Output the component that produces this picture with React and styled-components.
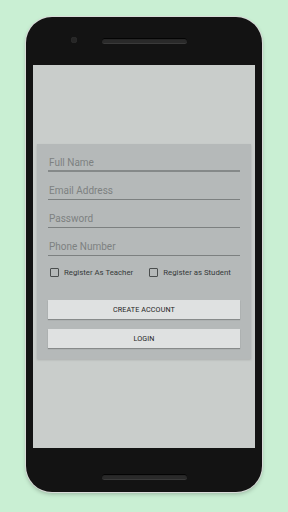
import React from "react";
import styled, { createGlobalStyle } from "styled-components";

const GlobalStyle = createGlobalStyle`
  html, body {
    margin: 0;
    padding: 0;
    background: #c9efd3;
    font-family: Roboto, "Liberation Sans", sans-serif;
  }
`;

const Page = styled.div`
  width: 288px;
  height: 512px;
  display: flex;
  justify-content: center;
  padding-top: 17px;
  box-sizing: border-box;
`;

const Phone = styled.div`
  width: 236px;
  height: 475px;
  background: #131313;
  border-radius: 26px;
  box-shadow: 0 0 0 1px #d9dcd9, 0 2px 4px rgba(0, 0, 0, 0.25);
  display: flex;
  flex-direction: column;
  box-sizing: border-box;
  padding: 0 7px;
`;

const Bezel = styled.div`
  height: ${(p) => p.h}px;
  flex: none;
  display: flex;
  justify-content: center;
  position: relative;
  padding-top: ${(p) => p.pad}px;
  box-sizing: border-box;
`;

const Speaker = styled.div`
  width: 85px;
  height: 5px;
  border-radius: 3px;
  background: #2a2a2a;
  box-shadow: inset 0 1px 1px #000, 0 1px 0 #3a3a3a;
`;

const Camera = styled.div`
  position: absolute;
  left: 38px;
  top: 20px;
  width: 6px;
  height: 6px;
  border-radius: 50%;
  background: #262626;
  box-shadow: inset 0 0 1px #444;
`;

const Screen = styled.div`
  height: 383px;
  flex: none;
  background: #c9cdcb;
  padding: 79px 4px 0;
  box-sizing: border-box;
`;

const Card = styled.div`
  background: #b5b9b9;
  padding: 0 11px 11px;
  box-shadow: 0 1px 2px rgba(0, 0, 0, 0.15);
`;

const Field = styled.div`
  height: 28px;
  box-sizing: border-box;
  display: flex;
  align-items: flex-end;
  padding: 0 0 ${(p) => (p.focused ? 1 : 2)}px 1px;
  border-bottom: ${(p) => (p.focused ? "2px solid #858989" : "1px solid #7c8080")};
  color: #7d8181;
  font-size: 10px;
  line-height: 12px;
`;

const CheckRow = styled.div`
  height: 20px;
  margin-top: 6px;
  display: flex;
  align-items: center;
  padding-left: 2px;
  gap: 16px;
`;

const CheckItem = styled.label`
  display: flex;
  align-items: center;
  gap: 5px;
  font-size: 7.8px;
  color: #363a3a;
`;

const Box = styled.span`
  width: 7px;
  height: 7px;
  border: 1.2px solid #4a4e4e;
  border-radius: 1px;
`;

const Button = styled.div`
  height: 19px;
  margin-top: ${(p) => p.mt}px;
  background: #dfe1e1;
  box-shadow: 0 1px 1px rgba(0, 0, 0, 0.25);
  display: flex;
  align-items: center;
  justify-content: center;
  font-size: 7.2px;
  color: #1e1e1e;
  letter-spacing: 0.1px;
`;

export default function App() {
  return (
    <>
      <GlobalStyle />
      <Page>
        <Phone>
          <Bezel h={48} pad={21}>
            <Camera />
            <Speaker />
          </Bezel>
          <Screen>
            <Card>
              <Field focused>Full Name</Field>
              <Field>Email Address</Field>
              <Field>Password</Field>
              <Field>Phone Number</Field>
              <CheckRow>
                <CheckItem>
                  <Box />
                  Register As Teacher
                </CheckItem>
                <CheckItem>
                  <Box />
                  Register as Student
                </CheckItem>
              </CheckRow>
              <Button mt={18}>CREATE ACCOUNT</Button>
              <Button mt={10}>LOGIN</Button>
            </Card>
          </Screen>
          <Bezel h={44} pad={26}>
            <Speaker />
          </Bezel>
        </Phone>
      </Page>
    </>
  );
}
